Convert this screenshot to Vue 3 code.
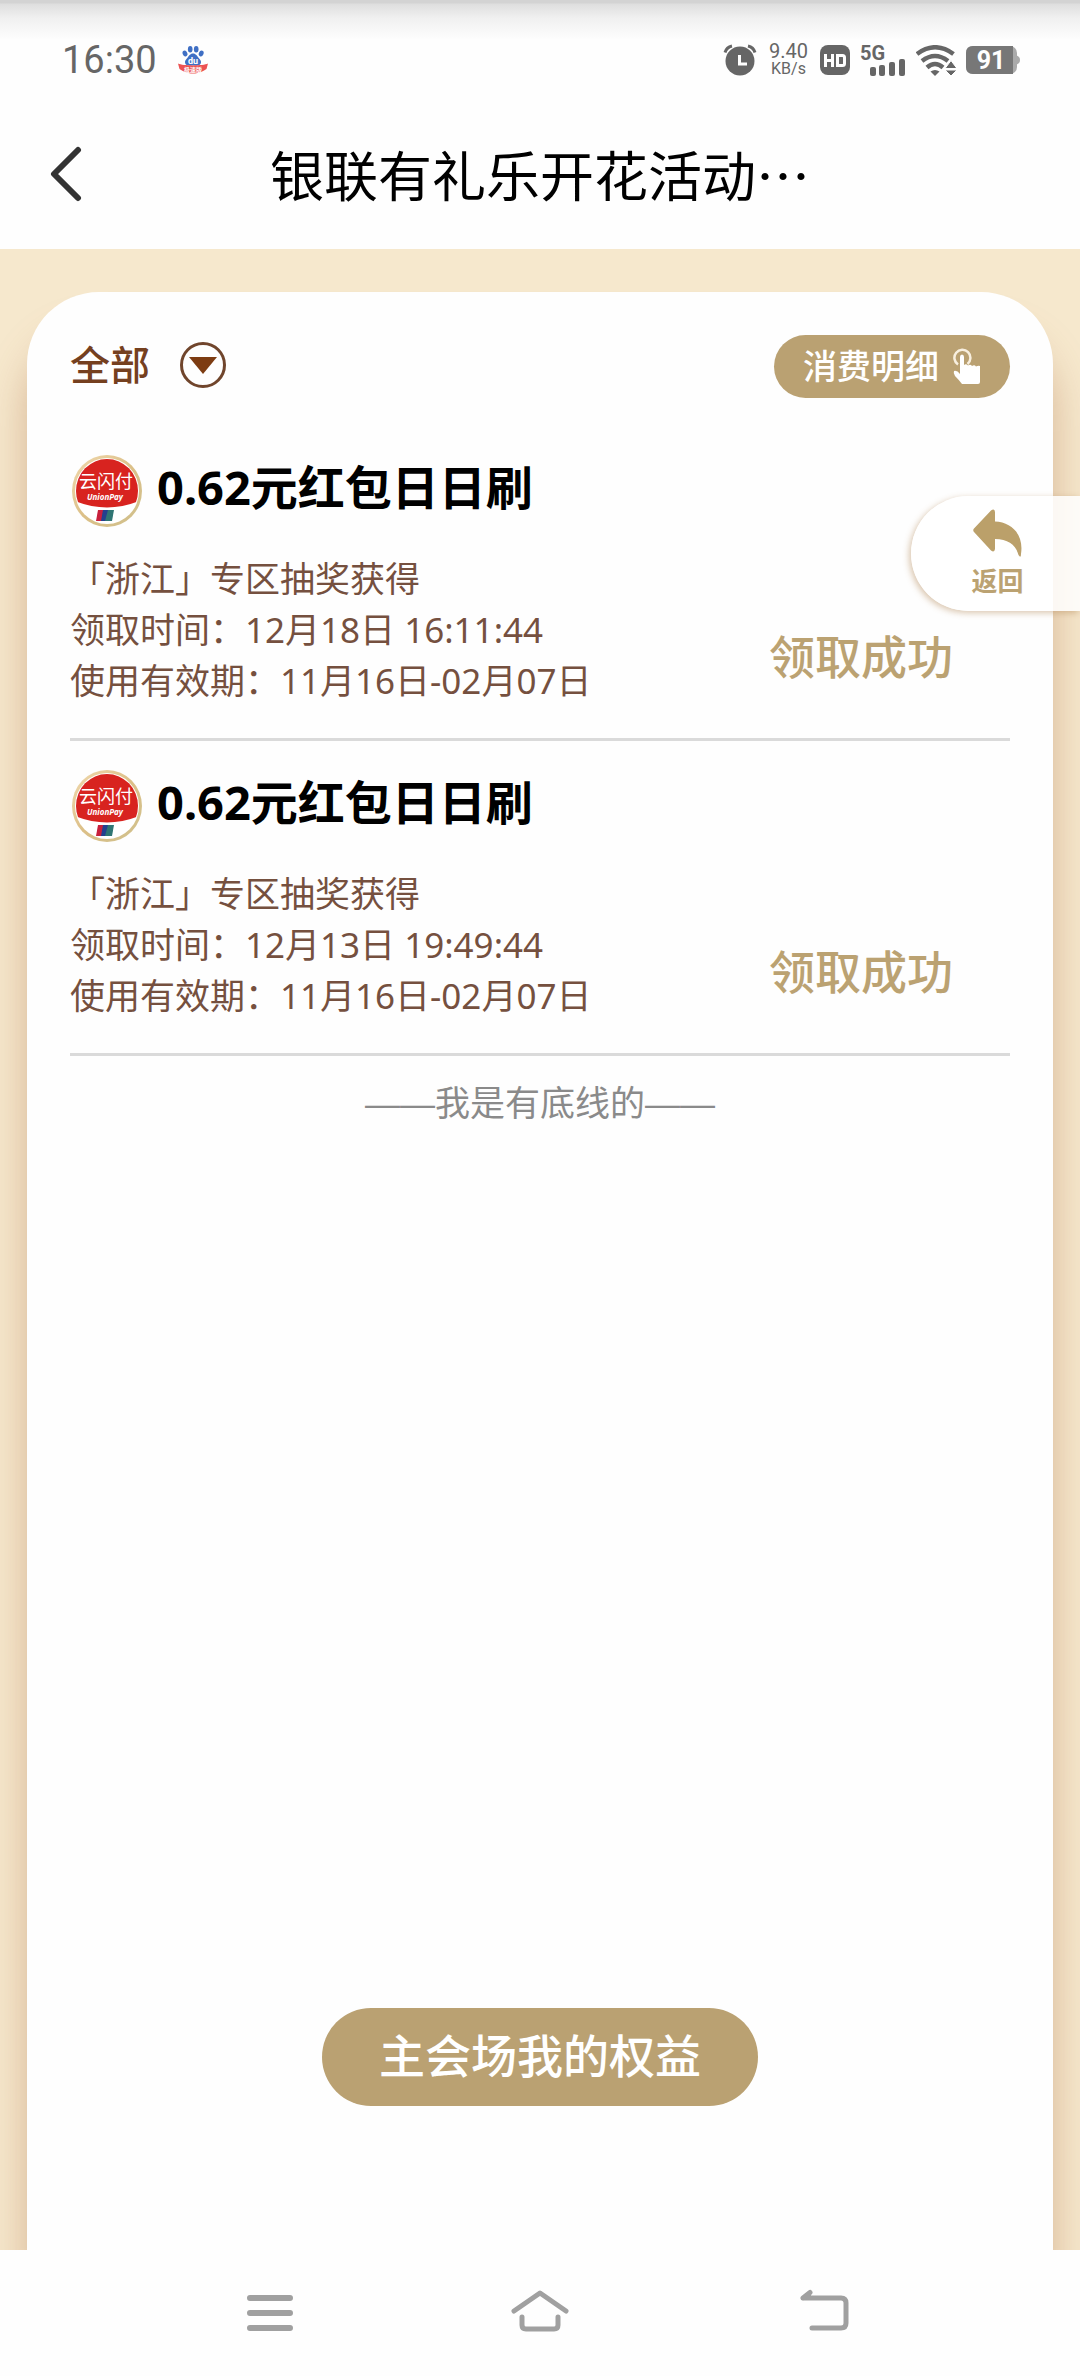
<script setup>
import { ref } from 'vue'

const filter = ref('全部')

const rewards = [
  {
    name: '0.62元红包日日刷',
    source: '「浙江」专区抽奖获得',
    received: '12月18日 16:11:44',
    validity: '11月16日-02月07日',
    status: '领取成功',
  },
  {
    name: '0.62元红包日日刷',
    source: '「浙江」专区抽奖获得',
    received: '12月13日 19:49:44',
    validity: '11月16日-02月07日',
    status: '领取成功',
  },
]
</script>

<template>
  <div class="screen">
    <header class="top">
      <div class="statusbar">
        <span class="time">16:30</span>
        <svg class="baidu" width="32" height="30" viewBox="0 0 32 30">
          <g fill="#3f6fc4">
            <ellipse cx="8" cy="8.500" rx="2.300" ry="3" transform="rotate(-25 8 8.500)" />
            <ellipse cx="13.200" cy="4.200" rx="2.300" ry="3.200" />
            <ellipse cx="19.200" cy="4.200" rx="2.300" ry="3.200" />
            <ellipse cx="24.200" cy="8.500" rx="2.300" ry="3" transform="rotate(25 24.200 8.500)" />
            <path d="M16 8.500c3 0 4 2.500 5.500 4.200C23 14.500 24 15.500 24 17c0 3-2 3.500-8 3.500S8 20 8 17c0-1.500 1-2.500 2.500-4.300C12 11 13 8.500 16 8.500z" />
          </g>
          <path d="M1 18.500c5 2.500 25 2.500 30 0l-1.500 5.500c-3 2-7 4.500-13.500 4.500S5.500 26 2.500 24z" fill="#ec5252" />
          <text x="16" y="18.500" text-anchor="middle" font-size="9" font-weight="700" fill="#fff">du</text>
          <text x="16" y="26.500" text-anchor="middle" font-size="6" font-weight="700" fill="#fff">极速版</text>
        </svg>
        <div class="indicators">
          <svg width="34" height="32" viewBox="0 0 34 32">
            <circle cx="17" cy="17" r="14.500" fill="#666" />
            <path d="M2 8.500C3 5 5.500 2.800 9 2M32 8.500C31 5 28.500 2.800 25 2" fill="none" stroke="#666" stroke-width="3" />
            <path d="M16.500 11v9h7.500" fill="none" stroke="#fff" stroke-width="3" />
          </svg>
          <div class="speed"><span class="rate">9.40</span><span class="unit">KB/s</span></div>
          <svg width="30" height="30" viewBox="0 0 30 30">
            <rect width="30" height="30" rx="8" fill="#666" />
            <path d="M5.500 9v13M12.500 9v13M5.500 15.500h7M17.500 10.500h5q2 0 2 2v6q0 2-2 2h-5z" fill="none" stroke="#fff" stroke-width="3" />
          </svg>
          <svg width="46" height="41" viewBox="0 -5 46 41">
            <text x="0" y="15" font-size="20" font-weight="700" fill="#666">5G</text>
            <rect x="10" y="22" width="6" height="9" rx="2" fill="#666" />
            <rect x="19" y="20" width="6" height="11" rx="2" fill="#666" />
            <rect x="29" y="17" width="6" height="14" rx="2" fill="#666" />
            <rect x="39" y="14" width="6" height="17" rx="2" fill="#666" />
          </svg>
          <svg width="40" height="31" viewBox="0 0 40 31">
            <g fill="none" stroke="#666" stroke-width="4.500">
              <path d="M1 9Q19 -4.500 37.500 9" />
              <path d="M6 16Q19 6 32 16" />
              <path d="M11 22.500Q19 15.500 27 22.500" />
            </g>
            <path d="M14.500 26.500q4.500-3 9 0L19 31z" fill="#666" />
            <path d="M29 23.500l6-8 6 8zM29 25l6 6 6-6z" fill="#666" stroke="#fefefe" stroke-width="1" />
          </svg>
          <svg width="54" height="28" viewBox="0 0 54 28">
            <path d="M49 9q5 1 5 5t-5 5z" fill="#aaa" />
            <rect width="51" height="28" rx="7" fill="#aaa" />
            <path d="M7 0h40v28H7q-7 0-7-7V7q0-7 7-7z" fill="#777" />
            <text x="25" y="23" text-anchor="middle" font-size="25" font-weight="700" fill="#fff">91</text>
          </svg>
        </div>
      </div>
      <div class="titlebar">
        <button class="back" aria-label="返回上一页">
          <svg width="32" height="56" viewBox="0 0 32 56">
            <path d="M28 4L4 28L28 52" fill="none" stroke="#333" stroke-width="6" stroke-linecap="round" stroke-linejoin="round" />
          </svg>
        </button>
        <h1>银联有礼乐开花活动⋯</h1>
      </div>
    </header>

    <main>
      <section class="card">
        <div class="toolbar">
          <div class="filter">
            <select v-model="filter" aria-label="筛选">
              <option>全部</option>
            </select>
            <svg width="46" height="46" viewBox="0 0 46 46">
              <circle cx="23" cy="23" r="21.500" fill="none" stroke="#70452c" stroke-width="3" />
              <path d="M9 15h28L23 32z" fill="#7d3c12" />
            </svg>
          </div>
          <button class="detail">
            <span>消费明细</span>
            <svg width="28" height="38" viewBox="0 0 28 38">
              <path d="M5 17.500A8 8 0 1 1 14.500 17" fill="none" stroke="#f8efdf" stroke-width="2.500" />
              <path d="M7 10q0-2.500 2-2.500t2 2.500v8q2-1.500 4 .5q2.500-1.500 4 .5q2.500-1.500 4 .5q2-1 4-.5V35q0 2-2 2H9q-3-4-7-8q-2-3-1-5q3-1 6 3z" fill="#fff" />
            </svg>
          </button>
        </div>

        <ul class="list">
          <li v-for="(r, i) in rewards" :key="i">
            <div class="name">
              <svg width="70" height="72" viewBox="0 0 70 72">
                <defs>
                  <linearGradient id="ring" x1="0" y1="0" x2="1" y2="1">
                    <stop offset="0" stop-color="#f1d9ae" />
                    <stop offset=".5" stop-color="#dcc088" />
                    <stop offset="1" stop-color="#cfc08c" />
                  </linearGradient>
                  <clipPath id="disc"><ellipse cx="35" cy="36" rx="31" ry="32" /></clipPath>
                </defs>
                <ellipse cx="35" cy="36" rx="35" ry="36" fill="url(#ring)" />
                <ellipse cx="35" cy="36" rx="32" ry="33" fill="#fff" />
                <path d="M0 0h70v45Q35 60 0 45z" fill="#d8231f" clip-path="url(#disc)" />
                <text x="34" y="33" text-anchor="middle" font-size="18" fill="#fff">云闪付</text>
                <text x="33" y="45" text-anchor="middle" font-size="8" font-weight="700" font-style="italic" fill="#fff">UnionPay</text>
                <path d="M26 55h6l-2 11h-6z" fill="#c8203c" />
                <path d="M31 55h6l-2 11h-6z" fill="#24408e" />
                <path d="M36 55h6l-2 11h-7z" fill="#2f7573" />
              </svg>
              <h2>{{ r.name }}</h2>
            </div>
            <div class="info">
              <div class="lines">
                <p>{{ r.source }}</p>
                <p>领取时间：{{ r.received }}</p>
                <p>使用有效期：{{ r.validity }}</p>
              </div>
              <span class="state">{{ r.status }}</span>
            </div>
          </li>
        </ul>
        <p class="end">——我是有底线的——</p>

        <button class="primary">主会场我的权益</button>
      </section>

      <a class="return" href="#">
        <svg width="52" height="50" viewBox="0 0 52 50">
          <path d="M2 20.500L19 2.500Q22.500 0 23 4v9.500C40 14 52 27 49 46q0 5-2.500 1C44 37 36 31 23 31v10q-.5 4-4 1.500L2 24q-1.500-2 0-3.500z" fill="#bba06a" />
        </svg>
        <span>返回</span>
      </a>
    </main>

    <nav>
      <button aria-label="菜单">
        <svg width="90" height="48" viewBox="-15 0 90 48">
          <path d="M10 9h40M10 24h40M10 39h40" stroke="#a0a0a0" stroke-width="6" stroke-linecap="round" />
        </svg>
      </button>
      <button aria-label="主页">
        <svg width="90" height="48" viewBox="-15 0 90 48">
          <path d="M4 22L30 4L56 22" fill="none" stroke="#a0a0a0" stroke-width="5" stroke-linecap="round" stroke-linejoin="round" />
          <path d="M12 28v8q0 4 4 4h28q4 0 4-4v-8" fill="none" stroke="#a0a0a0" stroke-width="5" stroke-linecap="round" />
        </svg>
      </button>
      <button aria-label="返回">
        <svg width="90" height="48" viewBox="-30 0 90 48">
          <path d="M16 2v8H8z" fill="#a0a0a0" />
          <path d="M8 9L15 3.500M8 9h38q5 0 5 5v20q0 5-5 5H17" fill="none" stroke="#a0a0a0" stroke-width="5" stroke-linecap="round" stroke-linejoin="round" />
        </svg>
      </button>
    </nav>
  </div>
</template>

<style>
body {
  margin: 0;
}
</style>

<style scoped>
.screen {
  display: flex;
  flex-direction: column;
  min-height: 100vh;
  background: #fefefe;
  font-family: "Noto Sans", "Noto Sans CJK SC", sans-serif;
}

button {
  border: 0;
  padding: 0;
  background: none;
  font-family: inherit;
  cursor: pointer;
}

svg {
  display: block;
  flex: none;
}

h1,
h2,
p,
ul {
  margin: 0;
  padding: 0;
}

.top {
  background: linear-gradient(#d3d3d3 0, #d3d3d3 3px, #dedede 4px, #f0f0f0 18px, #fefefe 40px);
}

.statusbar {
  display: flex;
  align-items: center;
  box-sizing: border-box;
  height: 104px;
  padding: 16px 60px 0 62px;
  color: #666;
  font-family: Roboto, "Noto Sans CJK SC", sans-serif;
}

.time {
  font-size: 38px;
  line-height: 44px;
}

.baidu {
  margin-left: 20px;
}

.indicators {
  display: flex;
  align-items: center;
  gap: 10px;
  margin-left: auto;
}

.speed {
  display: flex;
  flex-direction: column;
  align-items: center;
  margin: 0 2px;
}

.rate {
  font-size: 20px;
  line-height: 17px;
}

.unit {
  font-size: 16px;
  line-height: 17px;
}

.titlebar {
  position: relative;
  display: flex;
  align-items: center;
  justify-content: center;
  box-sizing: border-box;
  height: 145px;
  padding-bottom: 6px;
}

.back {
  position: absolute;
  left: 50px;
}

h1 {
  color: #000;
  font-family: "Noto Sans CJK SC", sans-serif;
  font-size: 54px;
  font-weight: 400;
  line-height: 80px;
}

main {
  position: relative;
  display: flex;
  flex: 1;
  flex-direction: column;
  padding: 43px 27px 0;
  overflow: hidden;
  background: #f6e8cd;
}

.card {
  display: flex;
  flex: 1;
  flex-direction: column;
  padding: 43px 43px 144px;
  border-radius: 72px 72px 0 0;
  background: #fefefe;
  box-shadow: 0 44px 40px rgba(170, 106, 66, 0.4);
}

.toolbar {
  display: flex;
  align-items: center;
  justify-content: space-between;
  margin-bottom: 28px;
}

.filter {
  position: relative;
  display: flex;
  align-items: center;
  margin-bottom: 4px;
}

.filter select {
  width: 156px;
  padding: 0;
  border: 0;
  appearance: none;
  background: none;
  color: #75401f;
  font-family: inherit;
  font-size: 40px;
  font-weight: 500;
  line-height: 58px;
}

.filter svg {
  position: absolute;
  right: 0;
  pointer-events: none;
}

.detail {
  display: flex;
  align-items: center;
  gap: 14px;
  height: 63px;
  padding: 0 29px 2px;
  border-radius: 32px;
  background: #baa172;
  color: #fff;
  font-size: 34px;
  font-weight: 500;
  line-height: 48px;
}

.list {
  list-style: none;
}

.list li {
  padding: 29px 0 32px;
  border-bottom: 3px solid #dadada;
}

.name {
  display: flex;
  align-items: flex-start;
  gap: 15px;
  padding-left: 2px;
}

h2 {
  color: #000;
  font-size: 47px;
  font-weight: 700;
  line-height: 64px;
}

.info {
  display: flex;
  align-items: flex-end;
  justify-content: space-between;
  margin-top: 26px;
  padding-right: 57px;
}

.lines {
  color: #75503f;
  font-size: 35px;
  line-height: 51px;
}

.state {
  padding-bottom: 24px;
  color: #bba272;
  font-size: 46px;
  font-weight: 500;
  line-height: 51px;
}

.end {
  margin-top: 22px;
  color: #8a8a8a;
  font-family: "Liberation Sans", "Noto Sans CJK SC", sans-serif;
  font-size: 35px;
  line-height: 51px;
  text-align: center;
}

.primary {
  align-self: center;
  height: 98px;
  margin-top: auto;
  padding: 0 57px 5px;
  border-radius: 49px;
  background: #baa172;
  color: #fff;
  font-size: 46px;
  font-weight: 500;
  line-height: 60px;
}

.return {
  position: absolute;
  top: 247px;
  right: 0;
  display: flex;
  flex-direction: column;
  align-items: center;
  box-sizing: border-box;
  width: 169px;
  height: 115px;
  padding: 12px 56px 0 60px;
  border-radius: 58px 0 0 58px;
  background: rgba(255, 255, 255, 0.85);
  box-shadow: -2px 2px 6px rgba(176, 130, 80, 0.45);
  color: #bba272;
  font-size: 26px;
  font-weight: 700;
  line-height: 46px;
  text-decoration: none;
}

nav {
  display: flex;
  align-items: center;
  justify-content: center;
  gap: 180px;
  height: 126px;
}
</style>
